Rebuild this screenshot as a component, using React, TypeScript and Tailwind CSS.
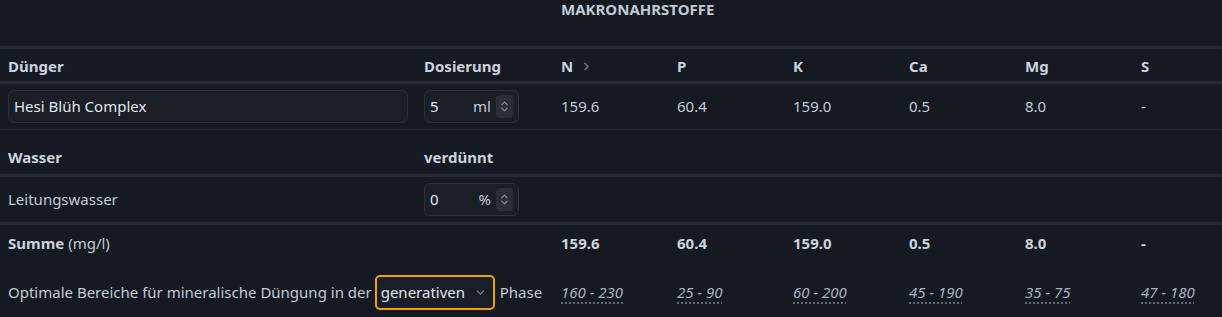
import React from 'react';
import { ChevronRight, ChevronDown, ChevronsUpDown } from 'lucide-react';

const cols = 'grid grid-cols-[416px_137px_116px_116px_116px_116px_116px_1fr]';
const nutrients = ['N', 'P', 'K', 'Ca', 'Mg', 'S'];
const values = ['159.6', '60.4', '159.0', '0.5', '8.0', '-'];
const ranges = ['160 - 230', '25 - 90', '60 - 200', '45 - 190', '35 - 75', '47 - 180'];

const NumberInput: React.FC<{ value: string; unit: string }> = ({ value, unit }) => (
  <div className="flex items-center w-[95px] h-[33px] rounded-md border border-[#2b303b] bg-[#1a1e27] pl-[5px] pr-[5px]">
    <span className="flex-1 text-[#e1e6ee]">{value}</span>
    <span className="text-[#c6ccd6] mr-[5px]">{unit}</span>
    <span className="flex items-center justify-center w-[17px] h-[23px] rounded-sm bg-[#2a2e38] text-[#8c93a0]">
      <ChevronsUpDown size={13} strokeWidth={2} />
    </span>
  </div>
);

export default function App() {
  return (
    <div
      className="w-[1222px] h-[317px] overflow-hidden bg-[#151922] text-[15px] text-[#c3cad5]"
      style={{ fontFamily: '"Noto Sans", "Open Sans", sans-serif' }}
    >
      <div className={`${cols} h-[49px] border-b-[3px] border-[#252a35]`}>
        <div className="col-start-3 col-span-6 pl-[8px] text-[15px] leading-[18px] font-bold text-[#c2cad6]">
          MAKRONAHRSTOFFE
        </div>
      </div>

      <div className={`${cols} h-[35px] items-center pt-[2px] border-b-[3px] border-[#252a35] font-bold text-[#ccd2db]`}>
        <div className="pl-[8px]">Dünger</div>
        <div className="pl-[8px]">Dosierung</div>
        {nutrients.map((n, i) => (
          <div key={n} className="pl-[8px] flex items-center gap-[7px]">
            {n}
            {i === 0 && <ChevronRight size={13} className="text-[#7d8492]" strokeWidth={2} />}
          </div>
        ))}
      </div>

      <div className={`${cols} h-[46px] items-center border-b border-[#252a35]`}>
        <div className="pl-[8px] pr-[8px]">
          <div className="h-[33px] rounded-md border border-[#2b303b] bg-[#1a1e27] pl-[5px] flex items-center text-[#e1e6ee]">
            Hesi Blüh Complex
          </div>
        </div>
        <div className="pl-[8px]">
          <NumberInput value="5" unit="ml" />
        </div>
        {values.map((v, i) => (
          <div key={i} className="pl-[8px]">{v}</div>
        ))}
      </div>

      <div className={`${cols} h-[47px] items-end pb-[6px] border-b-[3px] border-[#252a35] font-bold text-[#ccd2db]`}>
        <div className="pl-[8px]">Wasser</div>
        <div className="pl-[8px]">verdünnt</div>
      </div>

      <div className={`${cols} h-[48px] items-center border-b-[3px] border-[#252a35]`}>
        <div className="pl-[8px]">Leitungswasser</div>
        <div className="pl-[8px]">
          <NumberInput value="0" unit="%" />
        </div>
      </div>

      <div className={`${cols} h-[37px] items-center`}>
        <div className="pl-[8px]">
          <span className="font-bold text-[#ccd2db]">Summe</span> (mg/l)
        </div>
        <div />
        {values.map((v, i) => (
          <div key={i} className="pl-[8px] font-bold text-[#ccd2db]">{v}</div>
        ))}
      </div>

      <div className={`${cols} h-[55px] items-center pt-[5px]`}>
        <div className="col-span-2 pl-[8px] flex items-center whitespace-nowrap">
          <span>Optimale Bereiche für mineralische Düngung in der</span>
          <div className="ml-[3px] mr-[5px] flex items-center w-[120px] h-[35px] rounded-[5px] border-2 border-[#f59e0b] bg-[#1a1e27] pl-[4px] pr-[6px] text-[#e1e6ee]">
            <span className="flex-1">generativen</span>
            <ChevronDown size={13} className="text-[#7d8492]" />
          </div>
          <span>Phase</span>
        </div>
        {ranges.map((r, i) => (
          <div key={i} className="pl-[8px]">
            <span className="italic text-[#a9b2c0] underline decoration-dotted decoration-[#7d8492] underline-offset-[5px]">
              {r}
            </span>
          </div>
        ))}
      </div>
    </div>
  );
}
